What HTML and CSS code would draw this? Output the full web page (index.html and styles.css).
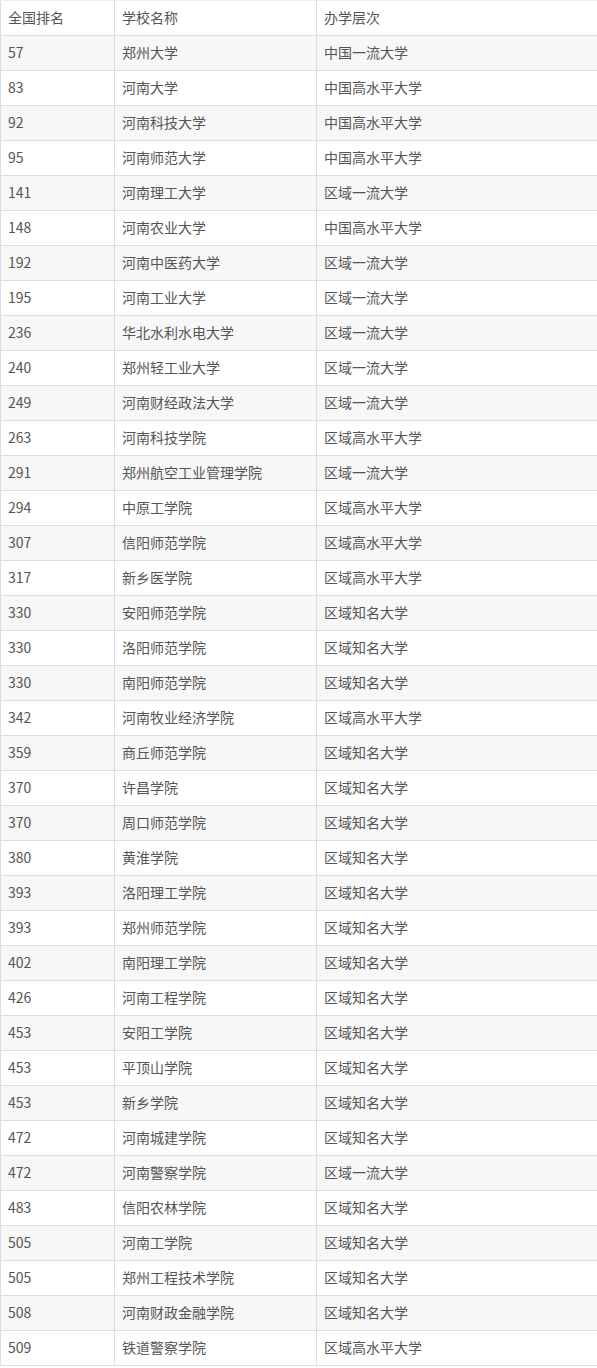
FILE: index.html
```html
<!DOCTYPE html>
<html lang="zh">
<head>
<meta charset="utf-8">
<link rel="stylesheet" href="styles.css">
</head>
<body>
<table class="rank">
<colgroup><col class="c1"><col class="c2"><col class="c3"></colgroup>
<tbody>
<tr><td>全国排名</td><td>学校名称</td><td>办学层次</td></tr>
<tr><td>57</td><td>郑州大学</td><td>中国一流大学</td></tr>
<tr><td>83</td><td>河南大学</td><td>中国高水平大学</td></tr>
<tr><td>92</td><td>河南科技大学</td><td>中国高水平大学</td></tr>
<tr><td>95</td><td>河南师范大学</td><td>中国高水平大学</td></tr>
<tr><td>141</td><td>河南理工大学</td><td>区域一流大学</td></tr>
<tr><td>148</td><td>河南农业大学</td><td>中国高水平大学</td></tr>
<tr><td>192</td><td>河南中医药大学</td><td>区域一流大学</td></tr>
<tr><td>195</td><td>河南工业大学</td><td>区域一流大学</td></tr>
<tr><td>236</td><td>华北水利水电大学</td><td>区域一流大学</td></tr>
<tr><td>240</td><td>郑州轻工业大学</td><td>区域一流大学</td></tr>
<tr><td>249</td><td>河南财经政法大学</td><td>区域一流大学</td></tr>
<tr><td>263</td><td>河南科技学院</td><td>区域高水平大学</td></tr>
<tr><td>291</td><td>郑州航空工业管理学院</td><td>区域一流大学</td></tr>
<tr><td>294</td><td>中原工学院</td><td>区域高水平大学</td></tr>
<tr><td>307</td><td>信阳师范学院</td><td>区域高水平大学</td></tr>
<tr><td>317</td><td>新乡医学院</td><td>区域高水平大学</td></tr>
<tr><td>330</td><td>安阳师范学院</td><td>区域知名大学</td></tr>
<tr><td>330</td><td>洛阳师范学院</td><td>区域知名大学</td></tr>
<tr><td>330</td><td>南阳师范学院</td><td>区域知名大学</td></tr>
<tr><td>342</td><td>河南牧业经济学院</td><td>区域高水平大学</td></tr>
<tr><td>359</td><td>商丘师范学院</td><td>区域知名大学</td></tr>
<tr><td>370</td><td>许昌学院</td><td>区域知名大学</td></tr>
<tr><td>370</td><td>周口师范学院</td><td>区域知名大学</td></tr>
<tr><td>380</td><td>黄淮学院</td><td>区域知名大学</td></tr>
<tr><td>393</td><td>洛阳理工学院</td><td>区域知名大学</td></tr>
<tr><td>393</td><td>郑州师范学院</td><td>区域知名大学</td></tr>
<tr><td>402</td><td>南阳理工学院</td><td>区域知名大学</td></tr>
<tr><td>426</td><td>河南工程学院</td><td>区域知名大学</td></tr>
<tr><td>453</td><td>安阳工学院</td><td>区域知名大学</td></tr>
<tr><td>453</td><td>平顶山学院</td><td>区域知名大学</td></tr>
<tr><td>453</td><td>新乡学院</td><td>区域知名大学</td></tr>
<tr><td>472</td><td>河南城建学院</td><td>区域知名大学</td></tr>
<tr><td>472</td><td>河南警察学院</td><td>区域一流大学</td></tr>
<tr><td>483</td><td>信阳农林学院</td><td>区域知名大学</td></tr>
<tr><td>505</td><td>河南工学院</td><td>区域知名大学</td></tr>
<tr><td>505</td><td>郑州工程技术学院</td><td>区域知名大学</td></tr>
<tr><td>508</td><td>河南财政金融学院</td><td>区域知名大学</td></tr>
<tr><td>509</td><td>铁道警察学院</td><td>区域高水平大学</td></tr>
</tbody>
</table>
</body>
</html>
```
FILE: styles.css
```css
html, body {
  margin: 0;
  padding: 0;
  background: #ffffff;
}
.rank {
  border-collapse: collapse;
  table-layout: fixed;
  width: 597px;
  font-family: "Noto Sans CJK SC", "Noto Sans", sans-serif;
  font-size: 14px;
  color: #555555;
}
.c1 { width: 114px; }
.c2 { width: 202px; }
.c3 { width: 281px; }
.rank td {
  border: 1px solid #dddddd;
  padding: 0 0 2px 7px;
  box-sizing: border-box;
  height: 35px;
  line-height: 20px;
  vertical-align: middle;
  white-space: nowrap;
}
.rank tr:first-child td {
  border-top-color: #eeeeee;
}
.rank tr:nth-child(even) td {
  background: #f7f7f7;
}
```
